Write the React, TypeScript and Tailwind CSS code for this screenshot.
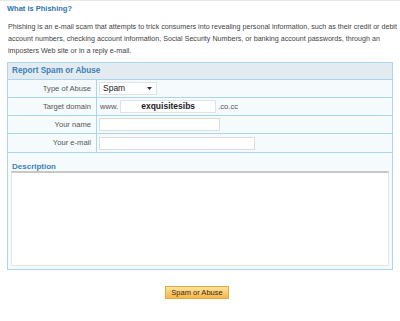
import React from "react";

export default function App() {
  const font = { fontFamily: '"Liberation Sans", Arial, sans-serif' };
  return (
    <div className="w-[400px] h-[321px] bg-white border-t border-[#e8e8e8] text-[#333]" style={font}>
      <div className="pl-[7px] pt-[3px] text-[7.5px] leading-[10px] font-bold text-[#2f73ad]">What is Phishing?</div>
      <div className="pl-[8px] pt-[7px] text-[7.15px] leading-[12px] text-[#444]">
        <div className="whitespace-nowrap">Phishing is an e-mail scam that attempts to trick consumers into revealing personal information, such as their credit or debit</div>
        <div className="whitespace-nowrap">account numbers, checking account information, Social Security Numbers, or banking account passwords, through an</div>
        <div className="whitespace-nowrap">imposters Web site or in a reply e-mail.</div>
      </div>
      <div className="ml-[7px] mt-[5px] w-[386px] border border-[#a9d6ec] bg-[#f5fafd]">
        <div className="h-[17px] bg-[#e4ebf0] border-b border-[#a9d6ec] pl-[4px] flex items-center text-[8.2px] font-bold text-[#3b80b6]">
          Report Spam or Abuse
        </div>
        <div className="grid grid-cols-[89px_1fr] text-[7.6px] text-[#555]">
          <div className="h-[18px] border-b border-r border-[#a9d6ec] flex items-center justify-end pr-[5px]">Type of Abuse</div>
          <div className="h-[18px] border-b border-[#a9d6ec] flex items-center pl-[2px]">
            <div className="w-[58px] h-[13px] bg-white border border-[#e2e2e2] flex items-center justify-between pl-[3px] pr-[4px]">
              <span className="text-[8.5px] text-[#222]">Spam</span>
              <svg width="5" height="3" viewBox="0 0 5 3"><path d="M0 0h5L2.5 3z" fill="#333" /></svg>
            </div>
          </div>
          <div className="h-[18px] border-b border-r border-[#a9d6ec] flex items-center justify-end pr-[5px]">Target domain</div>
          <div className="h-[18px] border-b border-[#a9d6ec] flex items-center pl-[3px]">
            <span>www.</span>
            <div className="ml-[2px] w-[96px] h-[13px] bg-white border border-[#e2e2e2] flex items-center justify-center text-[8.5px] font-bold text-[#222]">exquisitesibs</div>
            <span className="ml-[2px]">.co.cc</span>
          </div>
          <div className="h-[18px] border-b border-r border-[#a9d6ec] flex items-center justify-end pr-[5px]">Your name</div>
          <div className="h-[18px] border-b border-[#a9d6ec] flex items-center pl-[2px]">
            <div className="w-[121px] h-[13px] bg-white border border-[#dcdcdc]" />
          </div>
          <div className="h-[19px] border-b border-r border-[#a9d6ec] flex items-center justify-end pr-[5px]">Your e-mail</div>
          <div className="h-[19px] border-b border-[#a9d6ec] flex items-center pl-[2px]">
            <div className="w-[156px] h-[13px] bg-white border border-[#dcdcdc]" />
          </div>
        </div>
        <div className="h-[18px] pl-[4px] pt-[9px] text-[8px] leading-[9px] font-bold text-[#3b80b6]">Description</div>
        <div className="mx-[3px] mb-[3px] h-[95px] bg-white border border-[#e4e4e4] border-t-[#c8c8c8] border-t-2" />
      </div>
      <div className="flex justify-center pt-[16px]">
        <div className="w-[64px] h-[13px] ml-[-6px] border border-[#e0a94a] bg-gradient-to-b from-[#fde39a] to-[#f6b546] flex items-center justify-center text-[7.5px] text-[#3a2b10]">
          Spam or Abuse
        </div>
      </div>
    </div>
  );
}
